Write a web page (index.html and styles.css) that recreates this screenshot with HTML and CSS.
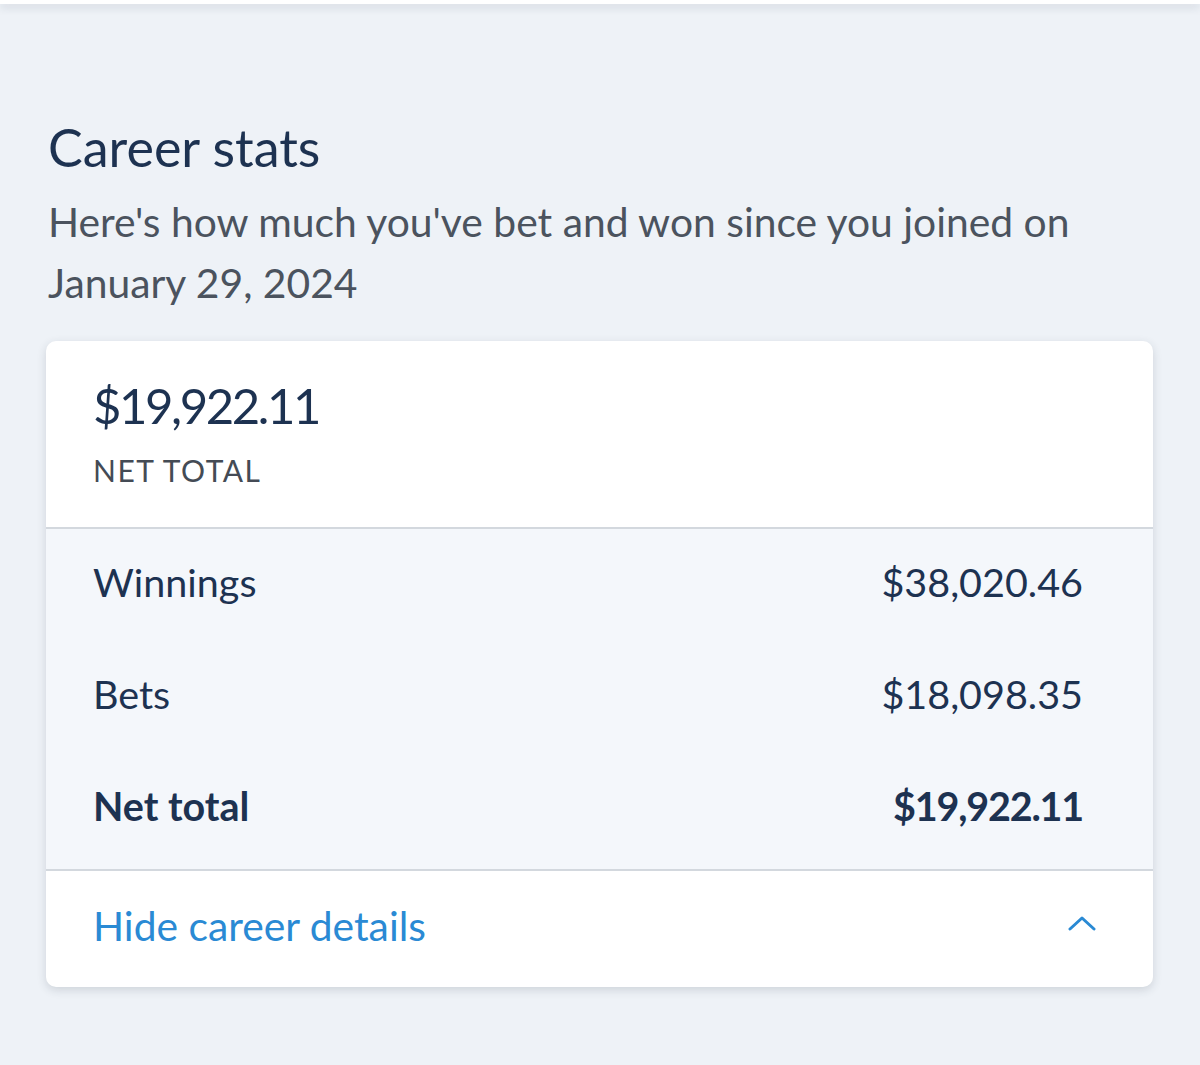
FILE: index.html
```html
<!DOCTYPE html>
<html lang="en">
<head>
<meta charset="utf-8">
<title>Career stats</title>
<link rel="stylesheet" href="styles.css">
</head>
<body>
<div class="topbar"></div>
<main class="page">
  <h1 class="title">Career stats</h1>
  <p class="subtitle">Here's how much you've bet and won since you joined on January 29, 2024</p>
  <section class="card">
    <div class="summary">
      <div class="amount">$19,922.11</div>
      <div class="label">NET TOTAL</div>
    </div>
    <div class="details">
      <div class="row"><span>Winnings</span><span class="value">$38,020.46</span></div>
      <div class="row"><span>Bets</span><span class="value">$18,098.35</span></div>
      <div class="row total"><span>Net total</span><span class="value">$19,922.11</span></div>
    </div>
    <div class="toggle">
      <span class="toggle-text">Hide career details</span>
      <svg class="chevron" width="30" height="18" viewBox="0 0 30 18" aria-hidden="true"><path d="M3 13 L15 2 L27 13" fill="none" stroke="#2a8ad4" stroke-width="3" stroke-linecap="round" stroke-linejoin="round"/></svg>
    </div>
  </section>
</main>
</body>
</html>
```
FILE: styles.css
```css
* { box-sizing: border-box; }
html, body { margin: 0; padding: 0; }
body {
  background: #eef2f7;
  font-family: "Lato", "Open Sans", sans-serif;
  color: #1d3251;
  height: 1065px;
  overflow: hidden;
}
.topbar {
  height: 4px;
  background: #ffffff;
  box-shadow: 0 3px 8px rgba(40, 50, 70, 0.18);
}
.page {
  padding: 0 47px 0 46px;
}
.title {
  margin: 0;
  padding-top: 113px;
  padding-left: 2px;
  font-size: 52px;
  line-height: 60px;
  font-weight: 400;
  color: #1d3251;
}
.subtitle {
  margin: 14px 0 0 0;
  padding-left: 2px;
  font-size: 40.8px;
  line-height: 61px;
  color: #4b535e;
  max-width: 1080px;
}
.card {
  margin-top: 28px;
  background: #ffffff;
  border-radius: 10px;
  box-shadow: 0 3px 10px rgba(40, 50, 70, 0.16);
  overflow: hidden;
}
.summary {
  padding: 34px 47px 39px;
  border-bottom: 2px solid #d3d8de;
}
.amount {
  font-size: 49px;
  line-height: 60px;
  letter-spacing: -2.4px;
  color: #1d3251;
}
.label {
  margin-top: 17px;
  font-size: 30px;
  line-height: 36px;
  letter-spacing: 1.5px;
  color: #444b55;
}
.details {
  background: #f4f7fb;
  padding: 0 70px 4px 47px;
  border-bottom: 2px solid #d3d8de;
}
.row {
  display: flex;
  justify-content: space-between;
  align-items: center;
  height: 112px;
  padding-bottom: 7px;
  font-size: 39.5px;
  color: #1d3251;
}
.row.total { font-weight: 700; }
.row.total .value { letter-spacing: -1.2px; }
.toggle {
  display: flex;
  justify-content: space-between;
  align-items: center;
  height: 116px;
  padding: 0 56px 8px 47px;
}
.toggle-text {
  font-size: 40.8px;
  color: #2a8ad4;
}
.chevron { display: block; }
```
